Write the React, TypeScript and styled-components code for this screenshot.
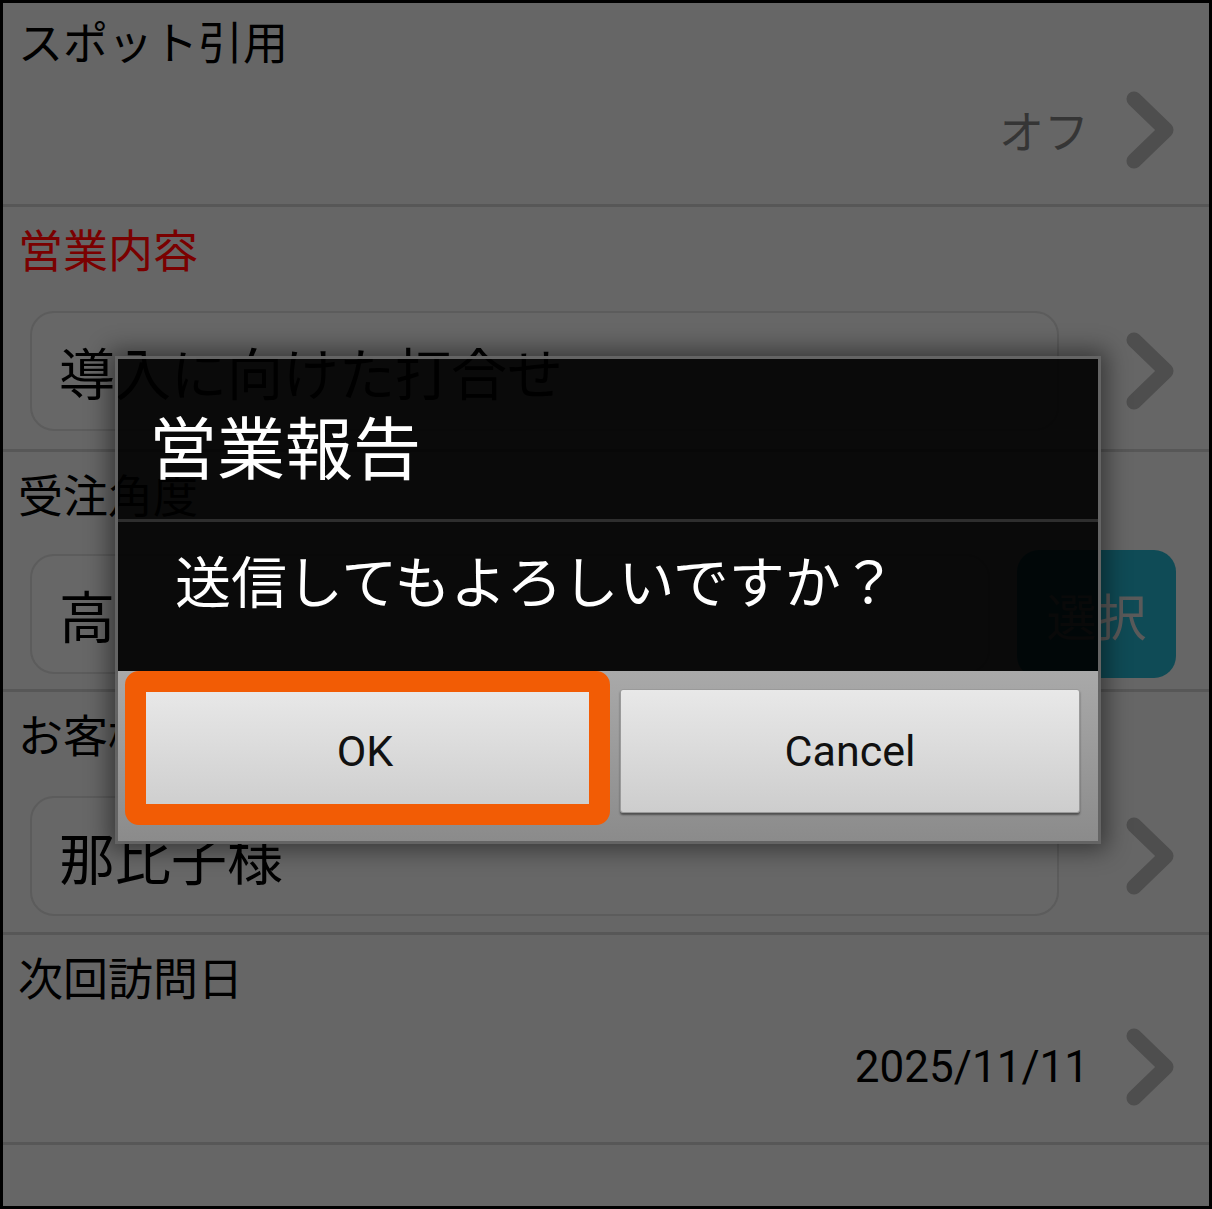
import React from "react";
import styled, { createGlobalStyle } from "styled-components";

const JP = `"Noto Sans CJK JP", "Noto Sans", sans-serif`;
const LATIN = `"Roboto", "Noto Sans CJK JP", sans-serif`;

const GlobalStyle = createGlobalStyle`
  html, body {
    margin: 0;
    padding: 0;
    background: #fff;
  }
  body {
    font-family: ${JP};
  }
`;

const Frame = styled.div`
  position: relative;
  width: 1212px;
  height: 1209px;
  box-sizing: border-box;
  border: 3px solid #000;
  background: #666;
  overflow: hidden;
`;

const Section = styled.section<{ $top?: number; $bottom?: number }>`
  padding: ${(p) => p.$top ?? 15}px 0 ${(p) => p.$bottom ?? 16}px 15px;
  border-bottom: 3px solid #575757;
`;

const Label = styled.div<{ $accent?: boolean }>`
  height: 54px;
  font-family: ${JP};
  font-size: 45px;
  line-height: 54px;
  color: ${(p) => (p.$accent ? "#7a0000" : "#000")};
  white-space: nowrap;
`;

const Row = styled.div<{ $gap?: number }>`
  display: flex;
  align-items: center;
  height: 120px;
  margin-top: ${(p) => p.$gap ?? 0}px;
`;

const InputBox = styled.div`
  flex: 1;
  height: 120px;
  box-sizing: border-box;
  margin-left: 12px;
  padding-left: 27px;
  display: flex;
  align-items: center;
  border: 2px solid #5c5c5c;
  border-radius: 24px;
  background: #676767;
  font-family: ${JP};
  font-size: 56px;
  line-height: 1.2;
  color: #000;
  white-space: nowrap;
`;

const Value = styled.span<{ $latin?: boolean; $muted?: boolean }>`
  margin-left: auto;
  font-family: ${(p) => (p.$latin ? LATIN : JP)};
  font-size: ${(p) => (p.$latin ? 44 : 45)}px;
  line-height: 1.2;
  color: ${(p) => (p.$muted ? "#353535" : "#000")};
`;

const ChevronIcon = styled.svg<{ $space: number }>`
  flex: none;
  width: 48px;
  height: 78px;
  margin-left: ${(p) => p.$space}px;
  margin-right: 35px;
`;

const SelectButton = styled.button`
  flex: none;
  width: 159px;
  height: 128px;
  margin: 0 33px 0 27px;
  border: none;
  border-radius: 22px;
  background: #0f4b56;
  font-family: ${JP};
  font-size: 50px;
  color: #5a5a5a;
  padding: 0;
`;

const Overlay = styled.div`
  position: absolute;
  inset: 0;
  display: flex;
  align-items: center;
  justify-content: center;
  box-sizing: border-box;
  padding: 0 0 10px 4px;
`;

const Dialog = styled.div`
  width: 986px;
  box-sizing: border-box;
  display: flex;
  flex-direction: column;
  border: 3px solid rgba(110, 110, 110, 0.9);
  background: rgba(0, 0, 0, 0.9);
  box-shadow: 0 0 22px 6px rgba(0, 0, 0, 0.45);
`;

const DialogTitle = styled.h2`
  margin: 0;
  height: 163px;
  box-sizing: border-box;
  padding: 45px 0 0 31px;
  border-bottom: 3px solid rgba(50, 50, 50, 0.9);
  font-family: ${JP};
  font-size: 68px;
  font-weight: 400;
  line-height: 1.2;
  color: #fff;
`;

const DialogMessage = styled.p`
  margin: 0;
  height: 149px;
  box-sizing: border-box;
  padding: 23px 0 0 57px;
  font-family: ${JP};
  font-size: 56px;
  line-height: 1.2;
  color: #fff;
`;

const ButtonBar = styled.div`
  display: flex;
  gap: 25px;
  padding: 18px 18px 28px 17px;
  background: linear-gradient(#a9a9a9, #8b8b8b);
`;

const DialogButton = styled.button`
  position: relative;
  flex: 1;
  height: 124px;
  padding: 0;
  border: 1px solid #9a9a9a;
  border-radius: 3px;
  background: linear-gradient(#e8e8e8, #cdcdcd);
  box-shadow: 0 2px 2px rgba(0, 0, 0, 0.45);
  font-family: ${LATIN};
  font-size: 43px;
  color: #111;
`;

const Highlight = styled.span`
  position: absolute;
  left: -11px;
  top: -19px;
  width: 485px;
  height: 154px;
  box-sizing: border-box;
  border: 21px solid #f25c05;
  border-radius: 14px;
  pointer-events: none;
`;

function Chevron({ space }: { space: number }) {
  return (
    <ChevronIcon $space={space} viewBox="0 0 48 78">
      <polyline
        points="8,8 40,39 8,70"
        fill="none"
        stroke="#4e4e4e"
        strokeWidth={15}
        strokeLinecap="round"
        strokeLinejoin="round"
      />
    </ChevronIcon>
  );
}

export default function App() {
  return (
    <>
      <GlobalStyle />
      <Frame>
        <Section $top={11} $bottom={14}>
          <Label>スポット引用</Label>
          <Row $gap={2}>
            <Value $muted>オフ</Value>
            <Chevron space={37} />
          </Row>
        </Section>

        <Section $bottom={18}>
          <Label $accent>営業内容</Label>
          <Row $gap={35}>
            <InputBox>導入に向けた打合せ</InputBox>
            <Chevron space={67} />
          </Row>
        </Section>

        <Section $bottom={15}>
          <Label>受注角度</Label>
          <Row $gap={33}>
            <InputBox>高</InputBox>
            <SelectButton>選択</SelectButton>
          </Row>
        </Section>

        <Section $bottom={16}>
          <Label>お客様名</Label>
          <Row $gap={35}>
            <InputBox>那比子様</InputBox>
            <Chevron space={67} />
          </Row>
        </Section>

        <Section $bottom={15}>
          <Label>次回訪問日</Label>
          <Row $gap={3}>
            <Value $latin>2025/11/11</Value>
            <Chevron space={37} />
          </Row>
        </Section>

        <Overlay>
          <Dialog>
            <DialogTitle>営業報告</DialogTitle>
            <DialogMessage>送信してもよろしいですか？</DialogMessage>
            <ButtonBar>
              <DialogButton>
                OK
                <Highlight />
              </DialogButton>
              <DialogButton>Cancel</DialogButton>
            </ButtonBar>
          </Dialog>
        </Overlay>
      </Frame>
    </>
  );
}
